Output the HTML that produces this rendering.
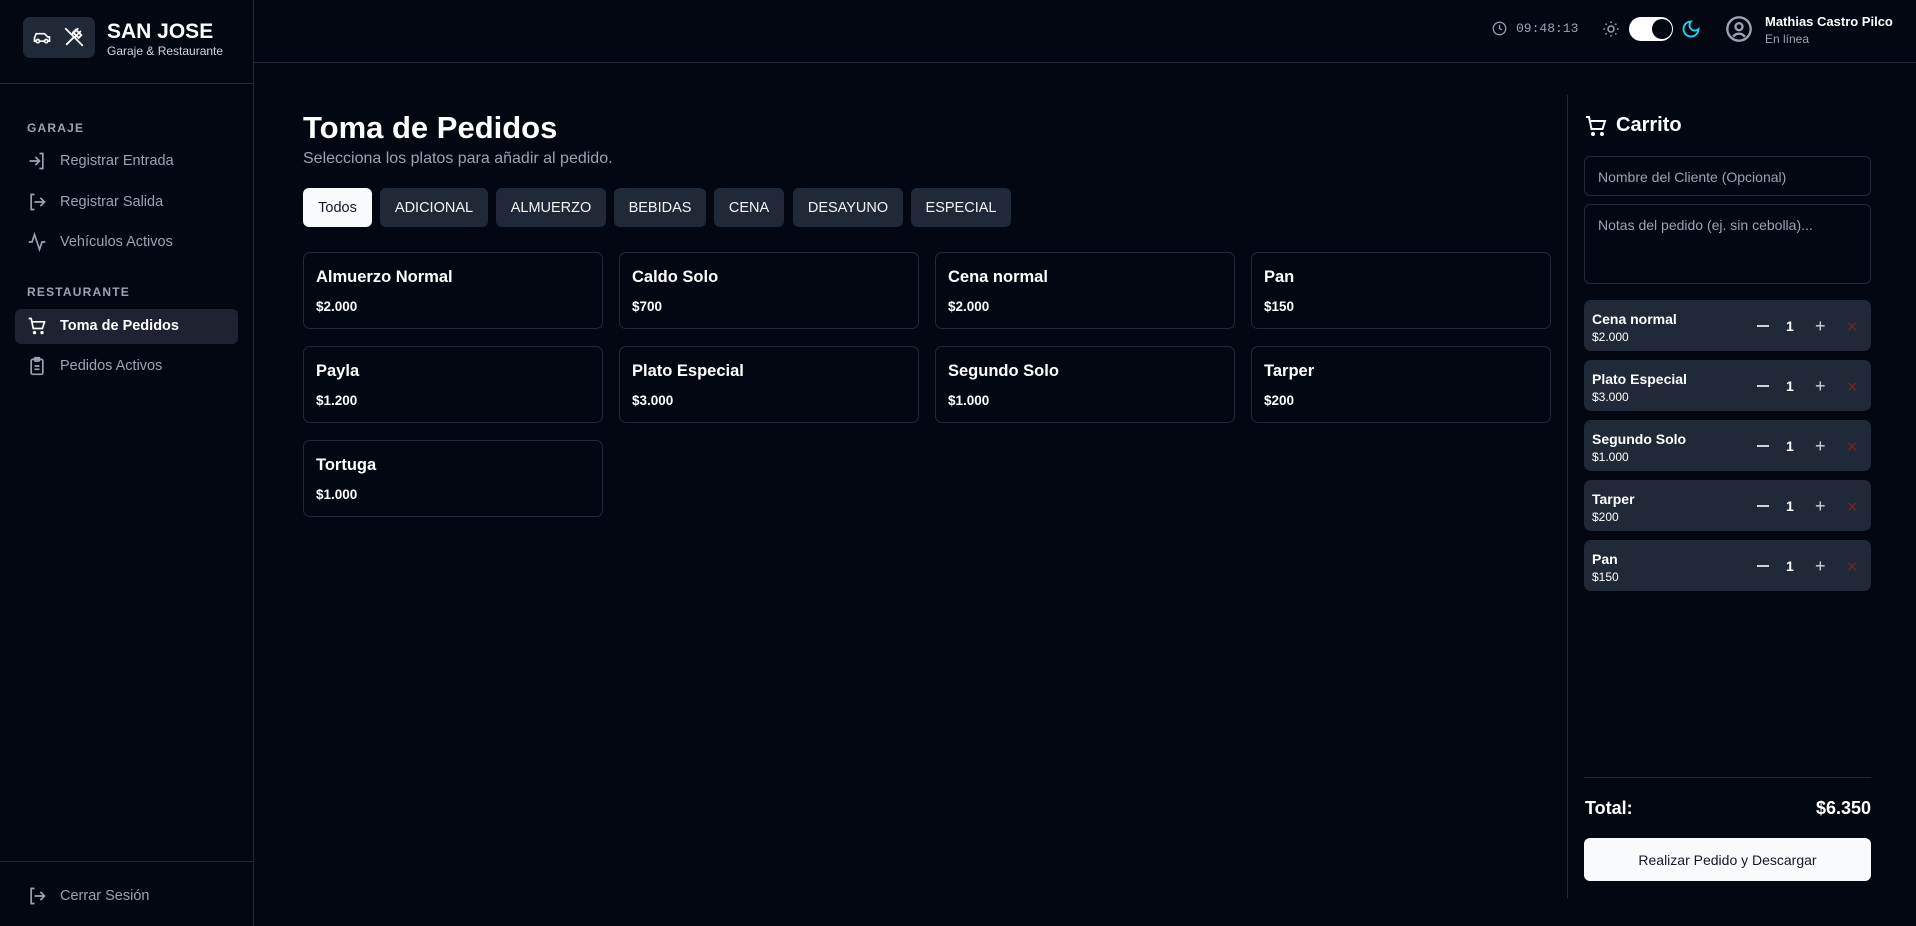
<!DOCTYPE html>
<html><head><meta charset="utf-8"><style>
*{box-sizing:border-box;margin:0;padding:0}
body{width:1916px;height:926px;background:#030712;font-family:"Liberation Sans",sans-serif;color:#fff;position:relative;overflow:hidden}
.a{position:absolute}
.side{left:0;top:0;width:254px;height:926px;border-right:1px solid #1f2937}
.lbl{font-size:12px;font-weight:bold;letter-spacing:1.2px;color:#9ca3af}
.mi{left:27px;font-size:14.5px;color:#9ca3af;display:flex;align-items:center;gap:13px}
.mi svg{width:20px;height:20px}
.btn{top:188px;height:39px;border-radius:6px;background:#1f2937;font-size:14.5px;display:flex;align-items:center;justify-content:center;color:#f3f4f6}
.card{width:300px;height:77px;border:1px solid #1f2937;border-radius:7px;background:#030712}
.card b{position:absolute;left:12px;top:15px;font-size:16.5px}
.card i{position:absolute;left:12px;top:46px;font-size:13.5px;font-style:normal;font-weight:bold}
.it{left:1584px;width:287px;height:51px;background:#1f2937;border-radius:7px}
.it b{position:absolute;left:8px;top:11px;font-size:14px}
.it span{position:absolute;left:8px;top:30px;font-size:12px}
.it .m{position:absolute;left:173px;width:12px;height:2px;background:#d1d5db;top:25px}
.it .q{position:absolute;left:202px;top:18px;font-size:14px;font-weight:bold}
.it .p{position:absolute;left:231px;top:18px;font-size:18px;color:#d1d5db;line-height:16px}
.it .x{position:absolute;left:262px;top:20px;font-size:15px;color:#7f1d1d;line-height:16px}
</style></head><body>
<div class="a side"></div>
<div class="a" style="left:0;top:83px;width:254px;height:1px;background:#1f2937"></div>
<div class="a" style="left:23px;top:17px;width:72px;height:41px;background:#1f2937;border-radius:7px"></div>
<svg class="a" style="left:31px;top:27px" width="22" height="20" viewBox="0 0 24 24" fill="none" stroke="#fff" stroke-width="2" stroke-linecap="round"><path d="M5 17H3v-4l2-5h10l4 4h2v5h-2"/><circle cx="7" cy="17" r="2"/><circle cx="17" cy="17" r="2"/><path d="M9 17h6"/></svg>
<svg class="a" style="left:63px;top:26px" width="22" height="22" viewBox="0 0 24 24" fill="none" stroke="#fff" stroke-width="2" stroke-linecap="round"><path d="M3 3l18 18M16 3l-6 6M19 6l-6 6M14 4l6 6-3 3-6-6zM4 20l7-7"/></svg>
<div class="a" style="left:107px;top:20px;font-size:21px;font-weight:bold">SAN JOSE</div>
<div class="a" style="left:107px;top:44px;font-size:12px;color:#d1d5db">Garaje &amp; Restaurante</div>
<div class="a lbl" style="left:27px;top:121px">GARAJE</div>
<div class="a mi" style="top:151px"><svg viewBox="0 0 24 24" fill="none" stroke="#9ca3af" stroke-width="2"><path d="M15 3h4v18h-4M10 17l5-5-5-5M15 12H3"/></svg>Registrar Entrada</div>
<div class="a mi" style="top:192px"><svg viewBox="0 0 24 24" fill="none" stroke="#9ca3af" stroke-width="2"><path d="M9 21H5V3h4M16 17l5-5-5-5M21 12H9"/></svg>Registrar Salida</div>
<div class="a mi" style="top:232px"><svg viewBox="0 0 24 24" fill="none" stroke="#9ca3af" stroke-width="2"><path d="M22 12h-4l-3 9L9 3l-3 9H2"/></svg>Vehículos Activos</div>
<div class="a lbl" style="left:27px;top:285px">RESTAURANTE</div>
<div class="a" style="left:15px;top:309px;width:223px;height:35px;background:#1f2230;border-radius:6px"></div>
<div class="a mi" style="top:316px;color:#fff;font-weight:bold"><svg viewBox="0 0 24 24" fill="none" stroke="#fff" stroke-width="2"><path d="M2 3h3l2.5 12h11L21 7H6"/><circle cx="9" cy="20" r="1"/><circle cx="18" cy="20" r="1"/></svg>Toma de Pedidos</div>
<div class="a mi" style="top:356px"><svg viewBox="0 0 24 24" fill="none" stroke="#9ca3af" stroke-width="2"><rect x="5" y="4" width="14" height="18" rx="2"/><rect x="9" y="2" width="6" height="4" rx="1"/><path d="M9 12h6M9 16h6"/></svg>Pedidos Activos</div>
<div class="a" style="left:0;top:861px;width:254px;height:1px;background:#1f2937"></div>
<div class="a mi" style="top:886px"><svg viewBox="0 0 24 24" fill="none" stroke="#9ca3af" stroke-width="2"><path d="M9 21H5V3h4M16 17l5-5-5-5M21 12H9"/></svg>Cerrar Sesión</div>

<div class="a" style="left:254px;top:62px;width:1662px;height:1px;background:#1f2937"></div>
<svg class="a" style="left:1492px;top:21px" width="15" height="15" viewBox="0 0 24 24" fill="none" stroke="#9ca3af" stroke-width="2"><circle cx="12" cy="12" r="10"/><path d="M12 6v6l4 2"/></svg>
<div class="a" style="left:1516px;top:21px;font-family:'Liberation Mono',monospace;font-size:13px;color:#9ca3af">09:48:13</div>
<svg class="a" style="left:1602px;top:20px" width="18" height="18" viewBox="0 0 24 24" fill="none" stroke="#9ca3af" stroke-width="2"><circle cx="12" cy="12" r="4"/><path d="M12 2v2M12 20v2M4.9 4.9l1.4 1.4M17.7 17.7l1.4 1.4M2 12h2M20 12h2M4.9 19.1l1.4-1.4M17.7 6.3l1.4-1.4"/></svg>
<div class="a" style="left:1629px;top:17px;width:44px;height:24px;border-radius:12px;background:#fff"></div>
<div class="a" style="left:1652px;top:19px;width:20px;height:20px;border-radius:10px;background:#030712"></div>
<svg class="a" style="left:1681px;top:19px" width="20" height="20" viewBox="0 0 24 24" fill="none" stroke="#22d3ee" stroke-width="2.2"><path d="M12 3a6 6 0 0 0 9 9 9 9 0 1 1-9-9z"/></svg>
<svg class="a" style="left:1725px;top:15px" width="28" height="28" viewBox="0 0 24 24" fill="none" stroke="#9ca3af" stroke-width="2"><circle cx="12" cy="12" r="10"/><circle cx="12" cy="10" r="3"/><path d="M7 18.7a6 6 0 0 1 10 0"/></svg>
<div class="a" style="left:1765px;top:14px;font-size:13px;font-weight:bold">Mathias Castro Pilco</div>
<div class="a" style="left:1765px;top:32px;font-size:12px;color:#9ca3af">En línea</div>

<div class="a" style="left:303px;top:110px;font-size:31px;font-weight:bold">Toma de Pedidos</div>
<div class="a" style="left:303px;top:150px;font-size:16px;color:#9ca3af">Selecciona los platos para añadir al pedido.</div>
<div class="a btn" style="left:303px;width:69px;background:#f8fafc;color:#111827">Todos</div>
<div class="a btn" style="left:380px;width:108px">ADICIONAL</div>
<div class="a btn" style="left:496px;width:110px">ALMUERZO</div>
<div class="a btn" style="left:614px;width:92px">BEBIDAS</div>
<div class="a btn" style="left:714px;width:70px">CENA</div>
<div class="a btn" style="left:793px;width:110px">DESAYUNO</div>
<div class="a btn" style="left:911px;width:100px">ESPECIAL</div>

<div class="a card" style="left:303px;top:252px"><b>Almuerzo Normal</b><i>$2.000</i></div>
<div class="a card" style="left:619px;top:252px"><b>Caldo Solo</b><i>$700</i></div>
<div class="a card" style="left:935px;top:252px"><b>Cena normal</b><i>$2.000</i></div>
<div class="a card" style="left:1251px;top:252px"><b>Pan</b><i>$150</i></div>
<div class="a card" style="left:303px;top:346px"><b>Payla</b><i>$1.200</i></div>
<div class="a card" style="left:619px;top:346px"><b>Plato Especial</b><i>$3.000</i></div>
<div class="a card" style="left:935px;top:346px"><b>Segundo Solo</b><i>$1.000</i></div>
<div class="a card" style="left:1251px;top:346px"><b>Tarper</b><i>$200</i></div>
<div class="a card" style="left:303px;top:440px"><b>Tortuga</b><i>$1.000</i></div>

<div class="a" style="left:1567px;top:95px;width:1px;height:803px;background:#1f2937"></div>
<svg class="a" style="left:1584px;top:114px" width="24" height="24" viewBox="0 0 24 24" fill="none" stroke="#fff" stroke-width="2"><path d="M2 3h3l2.5 12h11L21 7H6"/><circle cx="9" cy="20" r="1"/><circle cx="18" cy="20" r="1"/></svg>
<div class="a" style="left:1616px;top:114px;font-size:20px;font-weight:bold">Carrito</div>
<div class="a" style="left:1584px;top:156px;width:287px;height:40px;border:1px solid #1f2937;border-radius:6px;font-size:14px;color:#9ca3af;padding:12px 13px">Nombre del Cliente (Opcional)</div>
<div class="a" style="left:1584px;top:204px;width:287px;height:80px;border:1px solid #1f2937;border-radius:6px;font-size:14px;color:#9ca3af;padding:12px 13px">Notas del pedido (ej. sin cebolla)...</div>
<div class="a it" style="top:300px"><b>Cena normal</b><span>$2.000</span><div class="m"></div><div class="q">1</div><div class="p">+</div><div class="x">✕</div></div>
<div class="a it" style="top:360px"><b>Plato Especial</b><span>$3.000</span><div class="m"></div><div class="q">1</div><div class="p">+</div><div class="x">✕</div></div>
<div class="a it" style="top:420px"><b>Segundo Solo</b><span>$1.000</span><div class="m"></div><div class="q">1</div><div class="p">+</div><div class="x">✕</div></div>
<div class="a it" style="top:480px"><b>Tarper</b><span>$200</span><div class="m"></div><div class="q">1</div><div class="p">+</div><div class="x">✕</div></div>
<div class="a it" style="top:540px"><b>Pan</b><span>$150</span><div class="m"></div><div class="q">1</div><div class="p">+</div><div class="x">✕</div></div>
<div class="a" style="left:1584px;top:777px;width:287px;height:1px;background:#1f2937"></div>
<div class="a" style="left:1585px;top:798px;font-size:18px;font-weight:bold">Total:</div>
<div class="a" style="left:1771px;width:100px;text-align:right;top:798px;font-size:18px;font-weight:bold">$6.350</div>
<div class="a" style="left:1584px;top:838px;width:287px;height:43px;background:#f8fafc;border-radius:6px;color:#111827;font-size:14px;display:flex;align-items:center;justify-content:center">Realizar Pedido y Descargar</div>
</body></html>
